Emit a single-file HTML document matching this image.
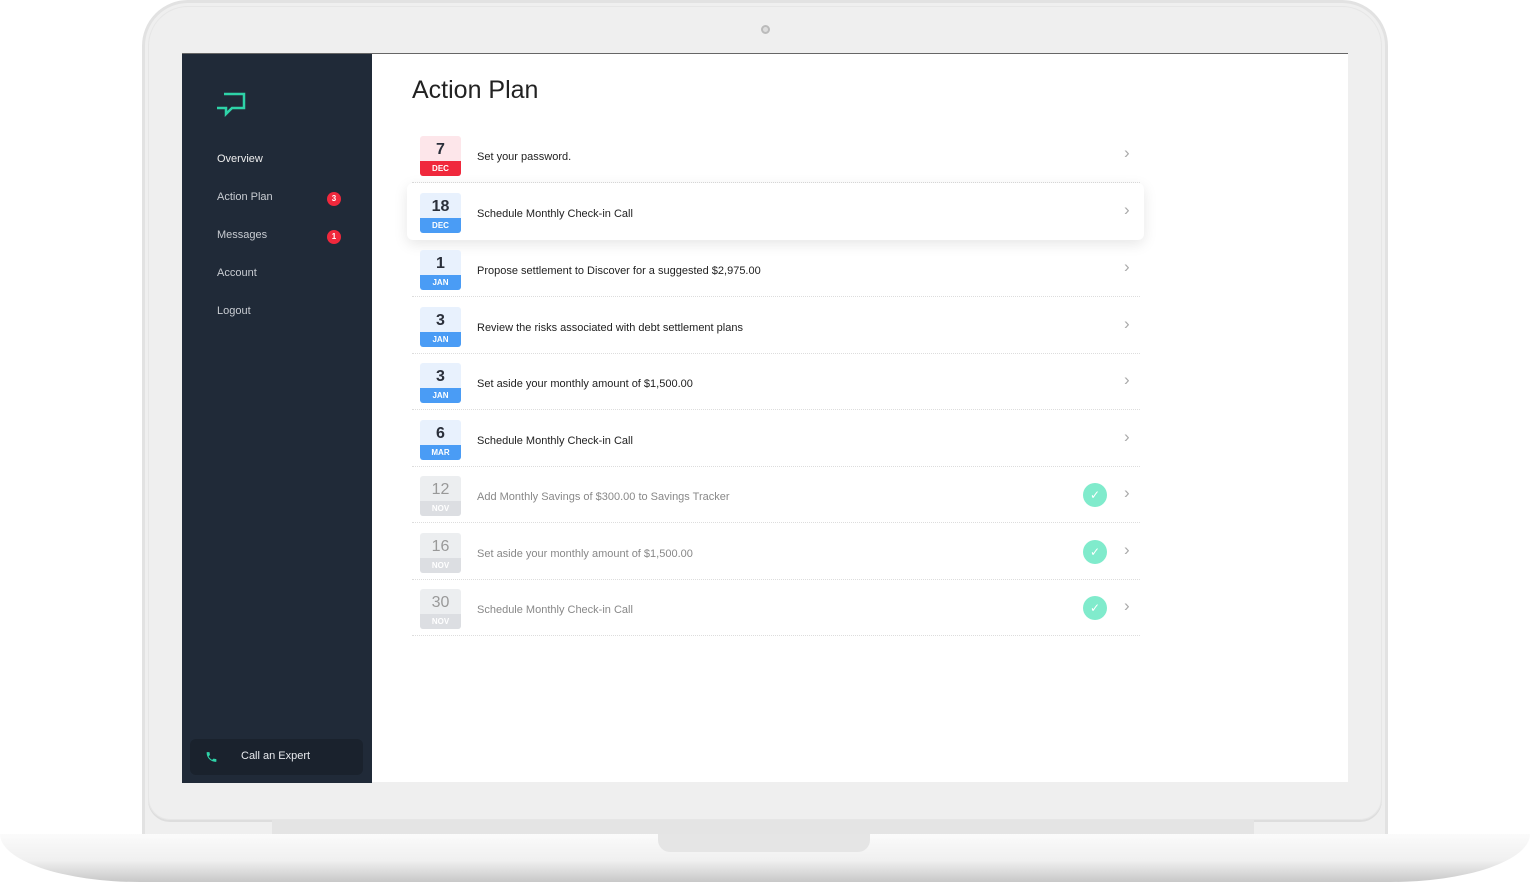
<!DOCTYPE html><html><head><style>
*{margin:0;padding:0;box-sizing:border-box}
body{width:1530px;height:882px;background:#fff;position:relative;overflow:hidden;font-family:"Liberation Sans",sans-serif}
.lid{position:absolute;left:142px;top:0;width:1246px;height:845px;border-radius:46px 46px 0 0;background:#efefef;border:3px solid #e2e2e2}
.lidin{position:absolute;left:148px;top:6px;width:1234px;height:814px;border-radius:40px 40px 22px 22px;border:1px solid #e6e6e6;box-shadow:0 2px 0 #ddd}
.cam{position:absolute;left:761px;top:25px;width:9px;height:9px;border-radius:50%;border:2px solid #bbb;background:#ddd}
.screen{position:absolute;left:182px;top:53px;width:1166px;height:729px;background:#fff;border-top:1px solid #666}
.side{position:absolute;left:0;top:0;width:190px;height:729px;background:#202a38}
.nav{position:absolute;left:35px;font-size:11px;color:#c8ccd2}
.badge{position:absolute;left:145px;width:14px;height:14px;border-radius:50%;background:#f0283c;color:#fff;font-size:8px;font-weight:bold;text-align:center;line-height:14px}
.call{position:absolute;left:8px;top:685px;width:173px;height:36px;border-radius:6px;background:#1a222d;color:#e8eaee;font-size:11px}
h1{position:absolute;left:230px;top:22px;font-weight:normal;font-size:25px;color:#222}
.row{position:absolute;left:230px;width:728px;height:57px;border-bottom:1px dotted #ddd}
.hl{background:#fff;box-shadow:0 4px 14px rgba(0,0,0,.1);border-radius:6px;left:225px;width:737px;border:none}
.d{position:absolute;left:8px;top:10px;width:41px;height:40px;border-radius:3px;overflow:hidden;text-align:center}
.d b{display:block;height:25px;line-height:27px;font-size:16px;font-weight:bold;color:#2a2f3a}
.d i{display:block;height:15px;line-height:15px;font-size:8px;font-style:normal;font-weight:bold;color:#fff}
.t{position:absolute;left:65px;top:25px;font-size:11px;color:#222}
.ch{position:absolute;left:712px;top:17px;color:#aaa;font-size:17px}
.ck{position:absolute;left:671px;top:17px;width:24px;height:24px;border-radius:50%;background:#80ebcc;color:#fff;text-align:center;line-height:24px;font-size:12px}
.g b{color:#999;font-weight:normal}.g .t{color:#888}
.base{position:absolute;left:0;top:834px;width:1530px;height:48px;background:linear-gradient(#fbfbfb,#f0f0f0 55%,#c8c8c8);border-radius:0 0 140px 140px/0 0 48px 48px}
.notch{position:absolute;left:658px;top:834px;width:212px;height:18px;background:#e5e5e5;border-radius:0 0 12px 12px}
</style></head><body>
<div class="lid"></div><div class="lidin"></div><div class="cam"></div>
<div style="position:absolute;left:272px;top:820px;width:982px;height:15px;background:#e4e4e4"></div>
<div class="base"></div><div class="notch"></div>
<div class="screen">
<div class="side">
<svg style="position:absolute;left:34px;top:38px" width="30" height="26" viewBox="0 0 30 26"><path d="M8 2H28V16H16L10 22V16H1" fill="none" stroke="#2ed3a8" stroke-width="2.5"/></svg>
<div class="nav" style="top:99px;color:#eee">Overview</div>
<div class="nav" style="top:137px">Action Plan</div><div class="badge" style="top:138px">3</div>
<div class="nav" style="top:175px">Messages</div><div class="badge" style="top:176px">1</div>
<div class="nav" style="top:213px">Account</div>
<div class="nav" style="top:251px">Logout</div>
<div class="call"><svg style="position:absolute;left:15px;top:11px" width="13" height="14" viewBox="0 0 24 24"><path d="M6.6 10.8c1.4 2.8 3.8 5.1 6.6 6.6l2.2-2.2c.3-.3.7-.4 1-.2 1.1.4 2.3.6 3.6.6.6 0 1 .4 1 1V20c0 .6-.4 1-1 1C10.6 21 3 13.4 3 4c0-.6.4-1 1-1h3.5c.6 0 1 .4 1 1 0 1.3.2 2.5.6 3.6.1.3 0 .7-.2 1z" fill="#2ed3a8"/></svg><span style="position:absolute;left:51px;top:11px">Call an Expert</span></div>
</div>
<h1>Action Plan</h1>
<div class="row" style="top:72px"><div class="d" style="background:#fde6ea"><b>7</b><i style="background:#f0283c">DEC</i></div><div class="t">Set your password.</div><div class="ch">›</div></div>
<div class="row hl" style="top:129px"><div class="d" style="left:13px;background:#e8f1fd"><b>18</b><i style="background:#4a9cf5">DEC</i></div><div class="t" style="left:70px">Schedule Monthly Check-in Call</div><div class="ch" style="left:717px">›</div></div>
<div class="row" style="top:186px"><div class="d" style="background:#e8f1fd"><b>1</b><i style="background:#4a9cf5">JAN</i></div><div class="t">Propose settlement to Discover for a suggested $2,975.00</div><div class="ch">›</div></div>
<div class="row" style="top:243px"><div class="d" style="background:#e8f1fd"><b>3</b><i style="background:#4a9cf5">JAN</i></div><div class="t">Review the risks associated with debt settlement plans</div><div class="ch">›</div></div>
<div class="row" style="top:299px"><div class="d" style="background:#e8f1fd"><b>3</b><i style="background:#4a9cf5">JAN</i></div><div class="t">Set aside your monthly amount of $1,500.00</div><div class="ch">›</div></div>
<div class="row" style="top:356px"><div class="d" style="background:#e8f1fd"><b>6</b><i style="background:#4a9cf5">MAR</i></div><div class="t">Schedule Monthly Check-in Call</div><div class="ch">›</div></div>
<div class="row g" style="top:412px"><div class="d" style="background:#eceef0"><b>12</b><i style="background:#dcdee2">NOV</i></div><div class="t">Add Monthly Savings of $300.00 to Savings Tracker</div><div class="ck">✓</div><div class="ch">›</div></div>
<div class="row g" style="top:469px"><div class="d" style="background:#eceef0"><b>16</b><i style="background:#dcdee2">NOV</i></div><div class="t">Set aside your monthly amount of $1,500.00</div><div class="ck">✓</div><div class="ch">›</div></div>
<div class="row g" style="top:525px"><div class="d" style="background:#eceef0"><b>30</b><i style="background:#dcdee2">NOV</i></div><div class="t">Schedule Monthly Check-in Call</div><div class="ck">✓</div><div class="ch">›</div></div>
</div>
</body></html>
